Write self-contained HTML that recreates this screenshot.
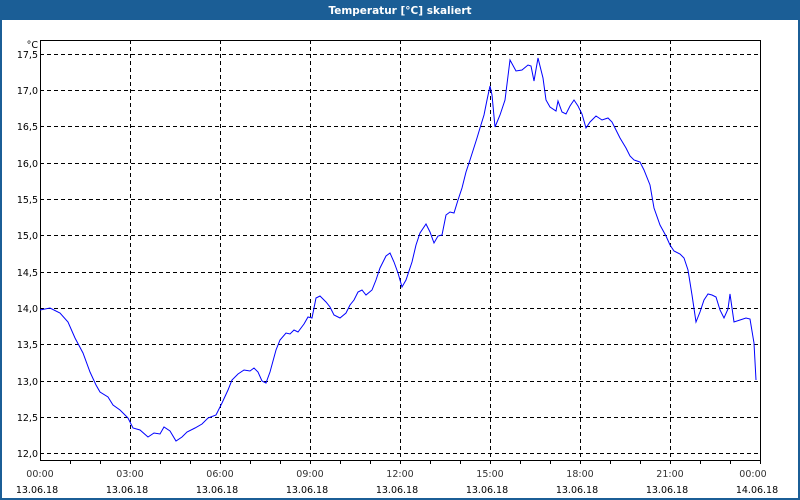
<!DOCTYPE html>
<html><head><meta charset="utf-8"><style>
body{margin:0;width:800px;height:500px;overflow:hidden;background:#fff;font-family:"DejaVu Sans","Liberation Sans",sans-serif}
</style></head><body>
<svg width="800" height="500" xmlns="http://www.w3.org/2000/svg" style="display:block">
<rect x="0" y="0" width="800" height="500" fill="#1b5e96"/>
<rect x="2" y="20" width="796" height="478" fill="#fff"/>
<text x="400" y="14" fill="#fff" font-size="10.5" font-weight="bold" text-anchor="middle" font-family="DejaVu Sans, sans-serif">Temperatur [°C] skaliert</text>
<g stroke="#000" stroke-width="1" stroke-dasharray="4,3" fill="none">
<path d="M40 54.5H760M40 90.5H760M40 126.5H760M40 163.5H760M40 199.5H760M40 235.5H760M40 272.5H760M40 308.5H760M40 344.5H760M40 381.5H760M40 417.5H760M40 453.5H760"/>
<path d="M130.5 40V460M220.5 40V460M310.5 40V460M400.5 40V460M490.5 40V460M580.5 40V460M670.5 40V460"/>
</g>
<rect x="40.5" y="40.5" width="720" height="420" fill="none" stroke="#000"/>
<g stroke="#000"><path d="M70.5 460v4M100.5 460v4M130.5 460v4M160.5 460v4M190.5 460v4M220.5 460v4M250.5 460v4M280.5 460v4M310.5 460v4M340.5 460v4M370.5 460v4M400.5 460v4M430.5 460v4M460.5 460v4M490.5 460v4M520.5 460v4M550.5 460v4M580.5 460v4M610.5 460v4M640.5 460v4M670.5 460v4M700.5 460v4M730.5 460v4M760.5 460v4"/></g>
<g font-size="9.5" fill="#000" text-anchor="end">
<text x="38" y="48">°C</text>
<text x="38" y="58">17,5</text><text x="38" y="94">17,0</text><text x="38" y="130">16,5</text><text x="38" y="167">16,0</text><text x="38" y="203">15,5</text><text x="38" y="239">15,0</text><text x="38" y="276">14,5</text><text x="38" y="312">14,0</text><text x="38" y="348">13,5</text><text x="38" y="385">13,0</text><text x="38" y="421">12,5</text><text x="38" y="457">12,0</text>
</g>
<g font-size="9.5" text-anchor="middle">
<g fill="#333"><text x="40" y="477">00:00</text><text x="130" y="477">03:00</text><text x="220" y="477">06:00</text><text x="310" y="477">09:00</text><text x="400" y="477">12:00</text><text x="490" y="477">15:00</text><text x="580" y="477">18:00</text><text x="670" y="477">21:00</text><text x="753" y="477">00:00</text></g>
<g fill="#000"><text x="37" y="493">13.06.18</text><text x="127" y="493">13.06.18</text><text x="217" y="493">13.06.18</text><text x="307" y="493">13.06.18</text><text x="397" y="493">13.06.18</text><text x="487" y="493">13.06.18</text><text x="577" y="493">13.06.18</text><text x="667" y="493">13.06.18</text><text x="757" y="493">14.06.18</text></g>
</g>
<polyline fill="none" stroke="#0000ff" stroke-width="1" points="40,310 50,308 60,313 68,322 75,338 83,353 90,372 96,385 100,392 108,397 113,405 120,410 128,418 133,428 140,430 148,437 154,433 160,434 164,427 170,431 176,441 182,437 187,432 195,428 202,424 208,418 216,415 222,403 228,390 232,380 238,374 244,370 250,371 254,368 258,372 262,381 266,383 270,372 276,350 280,340 286,333 290,334 294,330 298,332 304,324 308,317 312,318 316,298 320,296 326,302 330,307 334,315 340,318 346,313 350,305 354,300 358,292 362,290 366,295 372,290 376,280 380,268 386,256 390,253 394,262 398,273 402,287 406,280 412,262 416,245 420,233 426,224 430,232 434,243 438,236 442,235 446,215 450,212 454,213 458,200 462,188 466,172 470,160 477,138 480,128 484,115 487,100 490,86 492,95 495,127 500,115 505,100 510,60 516,71 522,70 528,65 531,66 534,81 538,58 543,78 546,100 550,107 556,111 558,101 562,112 566,114 570,106 574,100 578,106 582,114 586,128 590,122 596,116 602,120 608,118 612,122 616,130 620,138 626,148 630,156 634,160 640,162 644,170 650,185 654,208 660,225 666,236 670,245 674,251 680,254 684,258 688,270 692,295 696,322 700,312 704,300 708,294 712,295 716,297 720,310 724,318 728,309 730,294 734,322 740,320 746,318 750,319 754,343 756,380"/>
</svg>
</body></html>
